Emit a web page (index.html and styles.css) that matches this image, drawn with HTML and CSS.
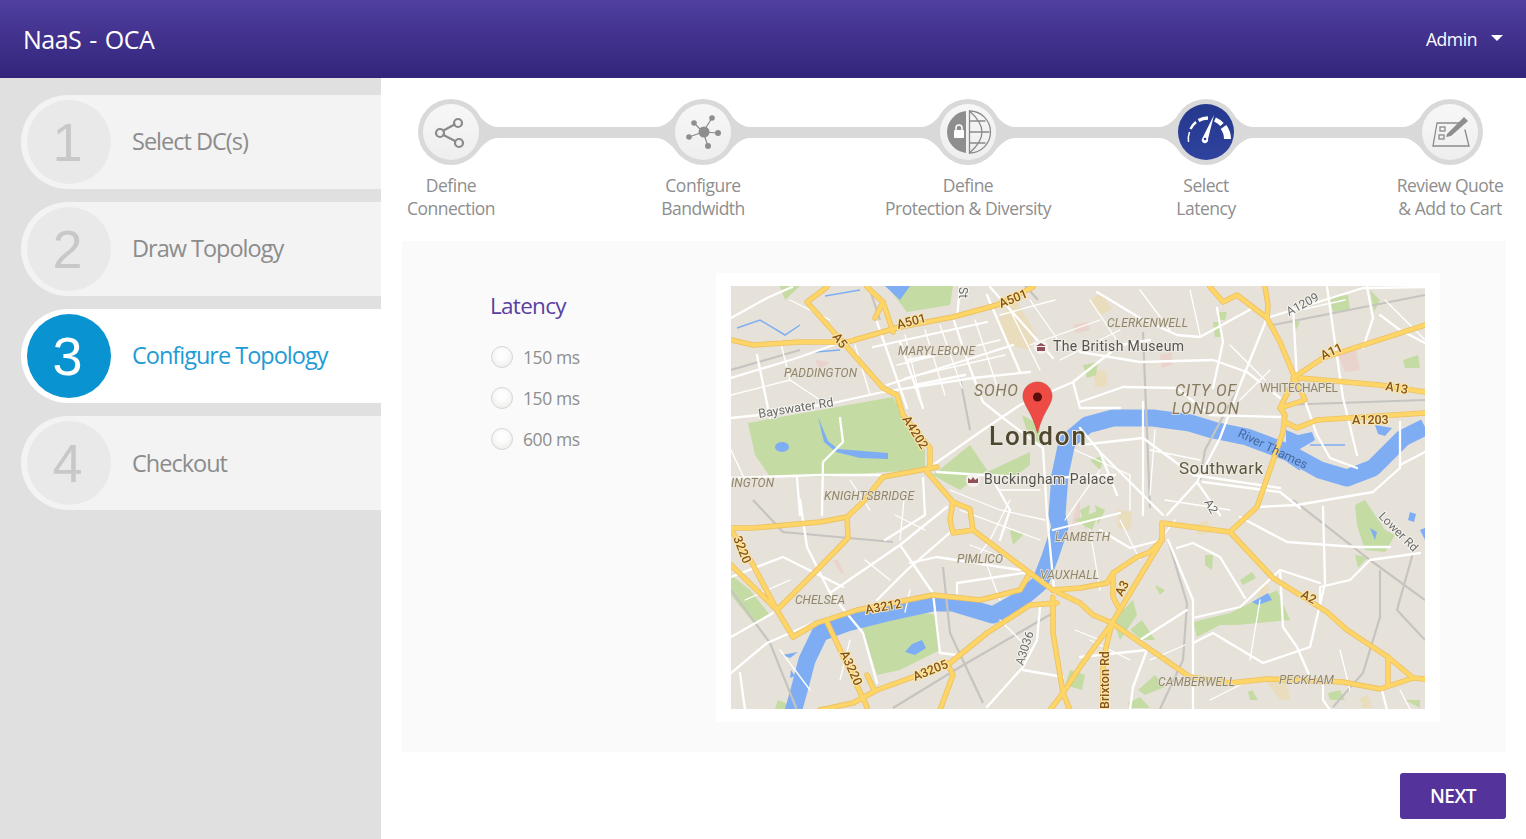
FILE: index.html
```html
<!DOCTYPE html>
<html lang="en">
<head>
<meta charset="utf-8">
<title>NaaS - OCA</title>
<link rel="stylesheet" href="styles.css">
</head>
<body>
<div class="app">
  <header class="topbar">
    <div class="brand">NaaS - OCA</div>
    <div class="user"><span>Admin</span><i class="caret"></i></div>
  </header>
  <div class="body">
    <nav class="sidebar">
      <a class="nav-row"><span class="nav-num">1</span><span class="nav-label">Select DC(s)</span></a>
      <a class="nav-row"><span class="nav-num">2</span><span class="nav-label">Draw Topology</span></a>
      <a class="nav-row is-active"><span class="nav-num">3</span><span class="nav-label">Configure Topology</span></a>
      <a class="nav-row"><span class="nav-num">4</span><span class="nav-label">Checkout</span></a>
    </nav>
    <main class="main">
      <section class="stepper">
        <svg class="track" viewBox="402 78 1104 163" aria-hidden="true">
          <defs>
            <path id="flare" d="M24 -22 Q36 -5.500 47 -5.500 L47 5.500 Q36 5.500 24 22 Z"/>
          </defs>
          <g class="track-shape">
            <rect x="451" y="127" width="999" height="11"/>
            <circle cx="451" cy="132" r="33"/><circle cx="703" cy="132" r="33"/><circle cx="968" cy="132" r="33"/><circle cx="1206" cy="132" r="33"/><circle cx="1450" cy="132" r="33"/>
            <use href="#flare" transform="translate(451 132.500)"/>
            <use href="#flare" transform="translate(703 132.500) scale(-1 1)"/>
            <use href="#flare" transform="translate(703 132.500)"/>
            <use href="#flare" transform="translate(968 132.500) scale(-1 1)"/>
            <use href="#flare" transform="translate(968 132.500)"/>
            <use href="#flare" transform="translate(1206 132.500) scale(-1 1)"/>
            <use href="#flare" transform="translate(1206 132.500)"/>
            <use href="#flare" transform="translate(1450 132.500) scale(-1 1)"/>
          </g>
        </svg>
        <div class="step">
          <div class="node">
            <svg viewBox="0 0 56 56" class="icon"><g class="ic-line"><path d="M20.500 26.500 L31.500 20.500 M20.500 31 L32 37"/><circle cx="35" cy="19" r="4"/><circle cx="17" cy="29" r="4"/><circle cx="36" cy="39" r="4"/></g></svg>
          </div>
          <div class="step-label">Define<br>Connection</div>
        </div>
        <div class="step step-b">
          <div class="node">
            <svg viewBox="0 0 56 56" class="icon"><path class="ic-thin" d="M28 28 L37 14 M28 28 L19 19 M28 28 L43 29 M28 28 L14 33 M28 28 L33 42"/><g class="ic-fill"><circle cx="29" cy="28" r="5.500"/><circle cx="37" cy="14" r="2.800"/><circle cx="19" cy="19" r="2.800"/><circle cx="43" cy="29" r="3"/><circle cx="14" cy="33" r="2.800"/><circle cx="33" cy="42" r="3"/></g></svg>
          </div>
          <div class="step-label">Configure<br>Bandwidth</div>
        </div>
        <div class="step step-c">
          <div class="node">
            <svg viewBox="0 0 56 56" class="icon">
              <path class="ic-fill" d="M26 7.100 A21 21 0 0 0 26 48.900 Z"/>
              <g class="ic-line ic-line-thin"><path d="M29.500 7 A21 21 0 0 1 29.500 49"/><path d="M29.500 7 Q42 18 42 28 Q42 38 29.500 49"/><path d="M29.500 7 V49 M29.500 17 H45 M29.500 28 H49 M29.500 39 H45"/></g>
              <rect class="ic-white" x="14" y="26" width="10" height="8" rx="1"/>
              <path class="ic-white-line" d="M16 26 V24 A3 3 0 0 1 22 24 V26"/>
            </svg>
          </div>
          <div class="step-label">Define<br>Protection &amp; Diversity</div>
        </div>
        <div class="step step-d">
          <div class="node node-active">
            <svg viewBox="0 0 56 56" class="icon">
              <g class="ic-gauge">
                <path class="g1" d="M10.500 38 A20 20 0 0 1 11.500 28"/>
                <path class="g2" d="M12.500 25 A20 20 0 0 1 18 18"/>
                <path class="g3" d="M20.500 16.500 A20 20 0 0 1 30 14"/>
                <path class="g4" d="M37 15.500 A20 20 0 0 1 44 20.500"/>
                <path class="g5" d="M45.500 23 A20 20 0 0 1 49.500 35"/>
              </g>
              <path class="ic-white" d="M36 11 L30 35 A3.200 3.200 0 1 1 24.500 34 Z"/>
              <circle class="ic-hole" cx="27" cy="35" r="1.300"/>
            </svg>
          </div>
          <div class="step-label">Select<br>Latency</div>
        </div>
        <div class="step step-e">
          <div class="node">
            <svg viewBox="0 0 56 56" class="icon">
              <path class="ic-line ic-line-thin" d="M15 19 H37 M43 26 L47 42 H11 L15 19"/>
              <rect class="ic-line ic-line-thin" x="18" y="23" width="5" height="4"/>
              <rect class="ic-line ic-line-thin" x="17" y="31" width="5" height="4"/>
              <path class="ic-fill" d="M25 30 L42 13 L46 17 L29 32 L24 33 Z"/>
            </svg>
          </div>
          <div class="step-label">Review Quote<br>&amp; Add to Cart</div>
        </div>
      </section>

      <section class="panel">
        <form class="latency">
          <h2 class="latency-title">Latency</h2>
          <label class="radio"><i class="radio-dot"></i>150 ms</label>
          <label class="radio"><i class="radio-dot"></i>150 ms</label>
          <label class="radio"><i class="radio-dot"></i>600 ms</label>
        </form>
        <div class="map-card">
          <svg class="map" viewBox="731 286 694 423" aria-label="Map of London">
            <defs>
              <g id="yroads">
                <path d="M731 340 L753 345 L800 342 L847 342 L900 327 L953 317 L997 305 L1033 287"/>
                <path d="M827 287 L807 302 L847 347 L883 388 L897 395 L903 415 L930 448 L930 465 L927 472 L953 502 L970 509 L973 530 L953 533 L950 520 L953 502"/>
                <path d="M867 287 L883 302 L893 332 M883 302 L875 318"/>
                <path d="M937 467 L883 477 L863 502 L847 517 L820 522 L753 528 L731 528"/>
                <path d="M847 517 L848 538 L817 570 L777 610 L731 565 M777 610 L752 563 L731 530"/>
                <path d="M777 610 L793 637 L817 623 L857 610 L933 595 L980 600 L1020 590 L1030 573 L973 530"/>
                <path d="M1030 573 L1053 590 L1080 588 L1107 583 L1113 573 L1137 557 L1150 552 L1162 540 L1162 523 L1230 532 L1257 507 L1283 432 L1285 415 L1280 408 L1295 378 L1280 342 L1267 318 L1237 295 L1223 302 L1210 287"/>
                <path d="M1113 573 L1113 597 L1120 610 M1267 318 L1268 305 L1265 287"/>
                <path d="M1293 378 L1323 358 L1425 325 M1300 378 L1380 385 L1425 392"/>
                <path d="M1280 408 L1305 400 L1295 378 M1287 423 L1297 428 L1317 420 L1425 413"/>
                <path d="M1230 532 L1273 578 L1327 612 L1347 630 L1388 657 L1413 678 L1425 679"/>
                <path d="M1413 678 L1380 689 L1343 682 L1267 679 L1230 683 L1190 677 L1112 623 L1080 667 L1063 693 L1050 710"/>
                <path d="M1388 657 L1388 685 M1112 623 L1162 540 M1112 623 L1103 660 L1103 710"/>
                <path d="M1053 590 L1080 603 L1093 615 L1112 623"/>
                <path d="M1053 597 L1053 633 L1063 693 L1070 710"/>
                <path d="M820 710 L853 703 L877 690 L913 677 L950 663 L987 633 L1030 605 L1057 603"/>
                <path d="M827 622 L867 707 M867 675 L874 690"/>
                <path d="M947 663 L953 675 L940 710"/>
              </g>
            </defs>
            <rect class="m-land" x="731" y="286" width="694" height="423"/>
            <g class="m-tan">
              <path d="M997 320 L1016 300 L1036 335 L1030 350 L1008 345 Z"/>
              <path d="M1090 300 L1102 292 L1112 310 L1100 315 Z"/>
              <path d="M1255 600 L1270 590 L1265 580 Z"/>
              <path d="M1195 525 L1207 520 L1212 532 L1198 535 Z"/>
              <path d="M1265 680 L1285 675 L1290 700 L1280 700 Z"/>
              <path d="M1118 510 L1132 512 L1130 530 L1118 528 Z"/>
              <path d="M1360 698 L1368 695 L1372 708 L1362 708 Z"/>
              <circle cx="928" cy="628" r="7"/>
              <path d="M1094 372 L1105 370 L1108 385 L1095 388 Z"/>
              <path d="M1040 565 L1050 560 L1045 570 Z"/>
            </g>
            <g class="m-pink">
              <path d="M1073 325 L1087 322 L1090 330 L1076 333 Z"/>
              <path d="M1160 355 L1172 352 L1172 365 L1162 368 Z"/>
              <path d="M1338 355 L1356 350 L1360 370 L1345 372 Z"/>
              <path d="M833 560 L840 572 L845 575 L838 560 Z"/>
              <path d="M1080 495 L1080 520 L1070 530 Z"/>
              <path d="M815 360 L830 362 L820 370 Z"/>
            </g>
            <g class="m-park">
              <path d="M748 423 L831 408 L893 397 L925 450 L925 470 L885 472 L826 477 L770 477 L755 455 Z"/>
              <path d="M887 286 L953 286 L950 305 L907 312 Z"/>
              <path d="M933 475 L970 445 L987 470 L960 490 L945 482 Z"/>
              <path d="M987 472 L1030 452 L1030 465 L1010 480 Z"/>
              <path d="M862 627 L920 612 L937 615 L940 650 L900 670 L877 675 Z"/>
              <path d="M1193 622 L1230 613 L1277 590 L1290 620 L1237 625 L1220 625 L1197 637 Z"/>
              <path d="M1355 505 L1365 500 L1385 530 L1395 535 L1385 552 L1365 550 L1357 525 Z"/>
              <path d="M731 575 L750 590 L770 615 L755 625 L731 595 Z"/>
              <path d="M1113 620 L1133 600 L1137 615 L1120 640 Z"/>
              <path d="M1130 630 L1142 620 L1155 640 L1142 640 Z"/>
              <path d="M1138 690 L1155 675 L1165 687 L1145 695 Z"/>
              <path d="M1205 555 L1213 555 L1212 570 L1205 565 Z M1240 580 L1252 572 L1256 578 L1243 585 Z M1155 585 L1165 590 L1160 595 Z"/>
              <path d="M1403 360 L1418 355 L1420 368 L1405 368 Z M1330 297 L1348 295 L1350 310 L1333 312 Z M1370 290 L1380 300 L1374 312 Z"/>
              <path d="M1083 365 L1098 362 L1096 375 L1087 378 Z M1217 312 L1227 312 L1225 320 L1217 320 Z M1213 322 L1222 322 L1222 337 L1215 337 Z"/>
              <path d="M1355 555 L1368 557 L1358 568 Z M1290 320 L1300 322 L1296 330 Z M1080 510 L1090 505 L1086 530 Z"/>
              <path d="M1010 530 L1025 533 L1013 545 Z M1095 505 L1105 510 L1098 525 Z M1070 670 L1085 675 L1082 690 L1065 685 Z"/>
              <path d="M1128 703 L1140 697 L1150 708 L1130 708 Z M1248 692 L1252 690 L1258 700 L1250 700 Z M1328 693 L1340 690 L1345 700 L1330 700 Z"/>
              <path d="M780 286 L800 286 L785 300 Z M1405 700 L1420 700 L1420 708 Z M778 700 L790 705 L785 709 L775 709 Z"/>
              <path d="M1022 415 L1040 425 L1040 445 L1028 435 Z M1090 460 L1105 455 L1100 470 Z M1075 520 L1100 510 L1092 530 Z"/>
            </g>
            <g class="m-water-fill">
              <ellipse cx="782" cy="447" rx="7" ry="5"/>
              <path d="M1286 430 L1298 435 L1312 432 L1315 440 L1295 452 L1286 445 Z"/>
              <path d="M1375 425 L1392 428 L1385 436 L1378 434 Z"/>
              <path d="M1252 602 L1268 593 L1272 600 L1258 605 Z"/>
              <path d="M1410 512 L1416 514 L1414 522 L1408 520 Z M1420 530 L1425 528 L1425 540 Z M1370 528 L1377 532 L1375 540 Z"/>
              <path d="M885 286 L910 286 L900 300 Z"/>
              <path d="M782 655 L798 652 L790 658 Z M791 670 L795 676 L790 678 Z"/>
              <path d="M818 417 L828 441 L838 449 L888 453 L888 459 L860 458 L836 452 L824 442 Z"/>
              <path d="M905 652 L912 644 L922 640 L926 648 L915 655 Z"/>
            </g>
            <path class="m-stream" d="M737 328 L760 320 L785 335 L800 325 M825 296 L860 290 M815 352 L840 350 M1288 462 L1300 470 M1310 445 L1345 445"/>
            <path class="m-river" d="M1425 427 L1403 438 L1373 468 L1347 478 L1320 470 L1287 452 L1247 437 L1213 430 L1190 423 L1153 418 L1113 418 L1087 425 L1067 442 L1060 475 L1057 515 L1060 527 L1050 557 L1040 583 L1020 600 L993 615 L953 603 L933 603 L887 613 L847 623 L820 633 L807 660 L800 687 L793 712"/>
            <g class="m-rail">
              <path d="M1273 325 L1425 295 M1280 405 L1425 400 M1143 332 L1150 508"/>
              <path d="M1293 500 L1370 560 L1425 600 M1380 570 L1380 617 L1363 673 L1333 707 M1413 553 L1397 610 L1425 640"/>
              <path d="M1168 540 L1187 603 L1183 660 L1160 709 M943 567 L950 633 L983 703 M893 708 L960 667 L1053 613"/>
              <path d="M753 500 L783 532 L893 542 M731 590 L770 643 L797 710 M870 290 L880 320 M960 378 L970 430"/>
              <path d="M731 370 L800 350 M1240 385 L1205 450 L1200 480 M1020 280 L1038 300"/>
            </g>
            <g class="m-minor">
              <path d="M905 335 L922 405 M925 330 L945 395 M940 325 L962 388 M975 320 L1000 395 M1010 310 L1040 370 M1030 300 L1065 350"/>
              <path d="M897 365 L1000 340 M905 378 L1005 355 M1000 315 L1055 300 M1030 345 L1100 320 M1060 360 L1120 330 M1090 300 L1120 345"/>
              <path d="M731 395 L790 380 L820 400 M790 380 L780 340 M855 345 L870 395 M790 300 L830 320 M731 450 L745 480"/>
              <path d="M950 490 L1000 510 L1045 520 M960 510 L1040 540 M970 545 L1010 560 M895 515 L925 530 M850 480 L870 510 M905 490 L900 540"/>
              <path d="M1000 490 L1040 490 M1010 500 L990 540 L975 560 M1075 450 L1130 475 L1130 510 M1100 470 L1065 520 M1090 530 L1100 590"/>
              <path d="M1150 450 L1200 460 M1155 430 L1150 495 M1165 500 L1230 510 M1175 520 L1160 540 M1120 520 L1140 560"/>
              <path d="M1230 345 L1265 380 M1190 290 L1200 335 M1140 290 L1170 330 M1240 400 L1270 370 M1300 310 L1345 300 M1385 300 L1425 340"/>
              <path d="M780 650 L810 690 M850 640 L840 680 M745 600 L790 580 M865 560 L890 580 M910 590 L905 612 M985 560 L1000 600 M1000 620 L1030 650"/>
              <path d="M1210 700 L1250 680 M1260 600 L1250 660 M1090 640 L1130 660 M1075 630 L1100 640 M1150 660 L1185 645 M1340 650 L1350 690 M1400 690 L1410 709"/>
            </g>
            <g class="m-road">
              <path d="M731 418 L760 415 L833 403 L883 392 L973 378 L1030 372"/>
              <path d="M731 318 L767 298 L792 287 M731 378 L797 358 L853 338 M757 355 L770 418"/>
              <path d="M840 418 L843 442 L823 462 L822 515 M731 478 L820 475 L883 475 M797 478 L800 515"/>
              <path d="M953 318 L970 368 L983 402 L1003 418 L1043 448 L1047 515 L1055 600"/>
              <path d="M987 295 L1020 372 M990 287 L1053 358 M933 465 L980 432 L1020 405 L1073 382 L1120 345"/>
              <path d="M877 322 L907 408 M900 342 L923 408 M887 385 L1013 345 M873 347 L987 322 M960 287 L957 318"/>
              <path d="M1073 382 L1080 408 L1120 408 M937 472 L983 475 L1053 478 M907 360 L960 350 M915 385 L965 375"/>
              <path d="M1080 352 L1140 362 L1213 360 L1247 372 L1280 398"/>
              <path d="M1267 318 L1240 385 L1220 438 L1197 482 L1167 515 M1080 402 L1123 387 L1177 388 L1210 415 L1280 417"/>
              <path d="M1143 402 L1143 515 M1270 317 L1363 288 L1425 287 M1217 308 L1223 342 L1213 388"/>
              <path d="M1097 292 L1140 318 L1177 335 L1200 337 L1253 308 M1293 308 L1297 378 L1317 435 L1330 458 L1357 468"/>
              <path d="M1327 287 L1343 398 L1357 455 M1367 287 L1373 318 L1363 348 M1400 422 L1400 468 L1373 492 L1297 505 L1257 507"/>
              <path d="M1080 445 L1143 438 L1193 475 L1280 488 M1080 428 L1100 452 L1117 495 M1100 452 L1163 515 M1197 482 L1220 515 M1203 482 L1280 492 L1300 508"/>
              <path d="M1425 452 L1400 465 M1425 343 L1400 330 L1380 315"/>
              <path d="M1168 540 L1193 600 L1193 710 M1240 517 L1287 542 L1357 547 L1390 547"/>
              <path d="M1323 507 L1325 583 L1310 647 L1263 663 L1213 633 L1193 643"/>
              <path d="M1420 553 L1370 560 L1350 580 L1320 587 L1320 603 M1280 570 L1320 583"/>
              <path d="M1193 618 L1240 607 L1280 570 L1283 627 L1297 647 L1310 677"/>
              <path d="M1177 548 L1193 543 L1220 557 L1245 598 M1140 640 L1187 610 M1323 680 L1323 700 L1330 710 M1382 690 L1387 710"/>
              <path d="M1080 657 L1147 650 L1133 687 L1130 710"/>
              <path d="M800 500 L807 547 L830 593 L863 633 L877 683 M731 577 L783 557 L843 587 M731 637 L773 613 M731 673 L767 643 L813 623"/>
              <path d="M830 593 L900 545 L947 507 M900 545 L933 593 L940 653 L957 655 M910 563 L937 557 L1020 570"/>
              <path d="M957 593 L957 583 L1030 572 M877 600 L907 570 L953 530 M1053 530 L1120 513"/>
              <path d="M1040 607 L1037 640 L1023 667 L987 707 M740 673 L745 710 M1023 670 L1063 677 M1100 530 L1130 548 L1162 540"/>
              <path d="M923 478 L925 515 L885 540 M993 480 L1010 510 L1000 540 M1050 478 L1115 475 M1120 345 L1150 340"/>
            </g>
            <use href="#yroads" class="m-y-outer"/>
            <use href="#yroads" class="m-y-inner"/>

            <g class="m-place">
              <text x="898" y="355" textLength="77">MARYLEBONE</text>
              <text x="784" y="377" textLength="73">PADDINGTON</text>
              <text x="1107" y="327" textLength="81">CLERKENWELL</text>
              <text x="1260" y="392" textLength="78" class="m-small">WHITECHAPEL</text>
              <text x="824" y="500" textLength="90">KNIGHTSBRIDGE</text>
              <text x="731" y="487" textLength="43">INGTON</text>
              <text x="957" y="563" textLength="46">PIMLICO</text>
              <text x="1055" y="541" textLength="55">LAMBETH</text>
              <text x="1040" y="579" textLength="59">VAUXHALL</text>
              <text x="795" y="604" textLength="50">CHELSEA</text>
              <text x="1158" y="686" textLength="77">CAMBERWELL</text>
              <text x="1279" y="684" textLength="55">PECKHAM</text>
              <text x="974" y="396" textLength="45" class="m-big">SOHO</text>
              <text x="1175" y="396" textLength="62" class="m-big">CITY OF</text>
              <text x="1172" y="414" textLength="68" class="m-big">LONDON</text>
            </g>
            <g class="m-ref">
              <text transform="translate(898 329) rotate(-14)">A501</text>
              <text transform="translate(1001 308) rotate(-22)">A501</text>
              <text transform="translate(832 337) rotate(52)">A5</text>
              <text transform="translate(902 419) rotate(58)">A4202</text>
              <text transform="translate(1323 360) rotate(-25)">A11</text>
              <text transform="translate(1385 390) rotate(10)">A13</text>
              <text transform="translate(1352 424)">A1203</text>
              <text transform="translate(866 614) rotate(-10)">A3212</text>
              <text transform="translate(915 681) rotate(-22)">A3205</text>
              <text transform="translate(840 653) rotate(66)">A3220</text>
              <text transform="translate(733 538) rotate(68)">3220</text>
              <text transform="translate(1122 597) rotate(-62)">A3</text>
              <text transform="translate(1300 597) rotate(28)">A2</text>
              <text transform="translate(1109 709) rotate(-90)">Brixton Rd</text>
            </g>
            <g class="m-grey">
              <text transform="translate(1289 316) rotate(-28)">A1209</text>
              <text transform="translate(959 287) rotate(90)">St</text>
              <text transform="translate(1204 502) rotate(60)">A2</text>
              <text transform="translate(1023 666) rotate(-72)">A3036</text>
              <text transform="translate(1378 517) rotate(45)">Lower Rd</text>
              <text transform="translate(759 418) rotate(-9)" class="m-bays">Bayswater Rd</text>
            </g>
            <text transform="translate(1237 436) rotate(26)" class="m-riverlabel">River Thames</text>
            <g class="m-poi">
              <text x="1053" y="351" textLength="131">The British Museum</text>
              <text x="984" y="484" textLength="130">Buckingham Palace</text>
            </g>
            <text x="1179" y="474" class="m-south" textLength="84">Southwark</text>
            <circle class="m-poi-badge" cx="1041" cy="347" r="7"/>
            <path class="m-poi-ic" d="M1036 346 L1041 343 L1046 346 Z M1037 347 H1045 V351 H1037 Z"/>
            <circle class="m-poi-badge" cx="973" cy="480" r="7"/>
            <path class="m-poi-ic" d="M968 483 V478 L971 480 L973 477 L975 480 L978 478 V483 Z"/>
            <text x="989" y="445" class="m-city" textLength="97">London</text>
            <path class="m-pin" d="M1037.500 382 C1029 382 1023 388.500 1023 396 C1023 405 1032 411 1037.500 433 C1043 411 1052 405 1052 396 C1052 388.500 1046 382 1037.500 382 Z"/>
            <circle class="m-pin-dot" cx="1037.500" cy="397" r="4.500"/>
          </svg>
        </div>
      </section>

      <footer class="actions">
        <button class="btn-next" type="button">NEXT</button>
      </footer>
    </main>
  </div>
</div>
</body>
</html>
```

FILE: styles.css
```css
* { box-sizing: border-box; }
html, body { margin: 0; height: 100%; }
body { font-family: "Open Sans", "Liberation Sans", sans-serif; color: #8c8c8c; background: #fff; overflow: hidden; }
.app { display: flex; flex-direction: column; height: 839px; }

.topbar {
  flex: none; height: 78px; display: flex; align-items: center; justify-content: space-between;
  padding: 0 23px;
  background: linear-gradient(#503f9f, #32247a);
  color: #fff;
}
.brand { font-size: 25px; letter-spacing: -0.5px; word-spacing: 2px; }
.user { display: flex; align-items: center; gap: 14px; font-size: 17.500px; letter-spacing: -0.4px; }
.caret { width: 0; height: 0; border-left: 6px solid transparent; border-right: 6px solid transparent; border-top: 6px solid #fff; margin-top: -3px; }

.body { flex: 1; display: flex; min-height: 0; }

.sidebar {
  flex: none; width: 381px; background: #e0e0e0;
  padding: 17px 0 0 21px;
  display: flex; flex-direction: column; gap: 13px;
}
.nav-row {
  height: 94px; display: flex; align-items: center; gap: 21px;
  padding-left: 6px;
  background: #f3f3f3; border-radius: 47px 0 0 47px;
}
.nav-num {
  width: 84px; height: 84px; flex: none; border-radius: 50%;
  padding-right: 3px;
  background: #e9e9e9; color: #c8c8c8;
  display: flex; align-items: center; justify-content: center;
  font: 54px "Liberation Sans", sans-serif;
}
.nav-label { margin-bottom: 3px; font-size: 23.500px; letter-spacing: -1px; color: #8c8c8c; }
.nav-row:last-child .nav-label { margin-bottom: 0; }
.is-active { background: #fff; }
.is-active .nav-num { background: #0a93d1; color: #fff; }
.is-active .nav-label { color: #1e9bd7; }

.main { flex: 1; min-width: 0; padding: 0 20px 0 21px; display: flex; flex-direction: column; }

.stepper { position: relative; flex: none; height: 163px; padding-top: 26px; display: flex; align-items: flex-start; }
.track { position: absolute; left: 0; top: 0; width: 1104px; height: 163px; }
.track-shape { fill: #d9d9d9; }
.step { position: relative; width: 98px; flex: none; display: flex; flex-direction: column; align-items: center; }
.step-b { margin-left: 154px; }
.step-c { margin-left: 167px; }
.step-d { margin-left: 140px; }
.step-e { margin-left: 146px; }
.node { width: 56px; height: 56px; border-radius: 50%; background: linear-gradient(#f7f7f7, #eeeeee); }
.node-active { background: linear-gradient(#24388c, #2f429e); }
.icon { display: block; width: 56px; height: 56px; }
.step-label { margin-top: 14px; font-size: 17.500px; line-height: 23px; letter-spacing: -0.5px; color: #8e8e8e; text-align: center; white-space: nowrap; }

.ic-line { fill: none; stroke: #8a8a8a; stroke-width: 2.200; stroke-linecap: round; }
.ic-line-thin { stroke-width: 1.300; }
.ic-thin { fill: none; stroke: #8a8a8a; stroke-width: 1.200; }
.ic-fill { fill: #8e8e8e; }
.ic-white { fill: #fff; }
.ic-white-line { fill: none; stroke: #fff; stroke-width: 1.500; }
.ic-hole { fill: #2a3c93; }
.ic-gauge { fill: none; stroke: #fff; }
.g1 { stroke-width: 1.500; }
.g2 { stroke-width: 2.500; }
.g3 { stroke-width: 3.500; }
.g4 { stroke-width: 4.500; }
.g5 { stroke-width: 7; }

.panel { flex: none; height: 511px; background: #fafafa; border-radius: 2px; display: flex; padding: 32px 66px 30px 88px; }
.latency { flex: 1; display: flex; flex-direction: column; padding-top: 18px; }
.latency-title { margin: 0 0 15px; font-size: 22.500px; font-weight: 400; line-height: 30px; letter-spacing: -0.7px; color: #5a40a2; }
.radio { display: flex; align-items: center; gap: 10px; height: 41px; margin-left: 1px; font-size: 17.500px; letter-spacing: -0.4px; color: #8e8e8e; }
.radio-dot { width: 22px; height: 22px; border-radius: 50%; border: 1px solid #d6d6d6; background: radial-gradient(circle at 50% 40%, #fdfdfd 30%, #e8e8e6 100%); }

.map-card { flex: none; width: 724px; height: 449px; background: #fff; padding: 13px 15px; }
.map { display: block; width: 694px; height: 423px; filter: blur(0.45px); }

.m-land { fill: #e6e2d9; }
.m-tan { fill: #e9ddbd; }
.m-pink { fill: #ead3cc; }
.m-park { fill: #c4dca3; }
.m-water-fill { fill: #7fadf4; }
.m-stream { fill: none; stroke: #7fadf4; stroke-width: 1.500; }
.m-river { fill: none; stroke: #7fadf4; stroke-width: 17; stroke-linejoin: round; }
.m-rail { fill: none; stroke: #c6c4c0; stroke-width: 2.200; }
.m-minor { fill: none; stroke: #fff; stroke-width: 1.300; stroke-linecap: round; }
.m-road { fill: none; stroke: #fff; stroke-width: 2.300; stroke-linejoin: round; stroke-linecap: round; }
.m-y-outer { fill: none; stroke: #eec064; stroke-width: 5.500; stroke-linejoin: round; stroke-linecap: round; }
.m-y-inner { fill: none; stroke: #fdd667; stroke-width: 3.800; stroke-linejoin: round; stroke-linecap: round; }

.m-place { font: italic 12px Roboto, sans-serif; fill: #91866a; paint-order: stroke; stroke: #e6e2d9; stroke-width: 1.500px; }
.m-big { font-size: 16px; letter-spacing: 1px; fill: #857a5f; }
.m-small { font-style: normal; font-size: 12px; }
.m-ref { font: 500 12.500px Roboto, sans-serif; fill: #85541d; paint-order: stroke; stroke: #fde7a8; stroke-width: 2px; }
.m-grey { font: 12px Roboto, sans-serif; fill: #6a6a66; paint-order: stroke; stroke: #f5f4f0; stroke-width: 2px; }
.m-bays { font-size: 12.500px; }
.m-riverlabel { font: 12.500px Roboto, sans-serif; fill: #44679c; }
.m-poi { font: 14px Roboto, sans-serif; fill: #55534e; paint-order: stroke; stroke: #efece6; stroke-width: 2px; }
.m-south { font: 17px Roboto, sans-serif; fill: #5d573f; paint-order: stroke; stroke: #eeebe4; stroke-width: 2px; }
.m-city { font: 500 26px Roboto, sans-serif; fill: #4f472f; paint-order: stroke; stroke: #ece9e1; stroke-width: 2px; }
.m-poi-badge { fill: #f5f3ef; }
.m-poi-ic { fill: #91505a; }
.m-pin { fill: #ee4b45; stroke: #c73a36; stroke-width: 0.600; }
.m-pin-dot { fill: #5a0f0c; }

.actions { flex: none; display: flex; justify-content: flex-end; padding-top: 21px; }
.btn-next {
  width: 106px; height: 46px; border: 0; border-radius: 3px;
  background: #54349b; color: #fff;
  font: 600 19px "Open Sans", sans-serif; letter-spacing: -0.5px;
}
```
